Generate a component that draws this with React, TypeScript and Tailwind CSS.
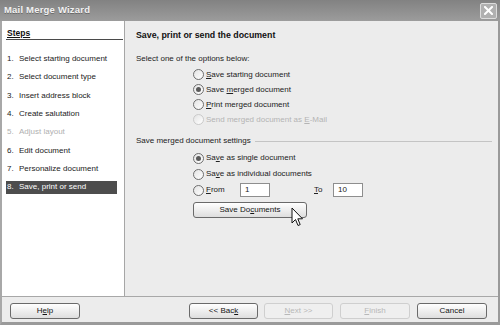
import React from "react";

const FONT = { fontFamily: '"Liberation Sans", Arial, sans-serif' };

type Step = { n: string; label: string; disabled?: boolean; active?: boolean };

const STEPS: Step[] = [
  { n: "1.", label: "Select starting document" },
  { n: "2.", label: "Select document type" },
  { n: "3.", label: "Insert address block" },
  { n: "4.", label: "Create salutation" },
  { n: "5.", label: "Adjust layout", disabled: true },
  { n: "6.", label: "Edit document" },
  { n: "7.", label: "Personalize document" },
  { n: "8.", label: "Save, print or send", active: true },
];

// underline one letter, like a windows mnemonic
function Mn({ text, at }: { text: string; at: number }) {
  return (
    <>
      {text.slice(0, at)}
      <span className="underline underline-offset-1">{text[at]}</span>
      {text.slice(at + 1)}
    </>
  );
}

function Radio({ checked, disabled, children }: { checked?: boolean; disabled?: boolean; children: React.ReactNode }) {
  return (
    <div className="flex h-full items-center">
      <span
        className={
          "flex h-[11px] w-[11px] items-center justify-center rounded-full border bg-gradient-to-br from-[#e4e4e4] to-white " +
          (disabled ? "border-[#cacaca]" : "border-[#6e6e6e]")
        }
      >
        {checked && <span className="h-[5px] w-[5px] rounded-full bg-[#5a5a5a]" />}
      </span>
      <span className={"ml-[2px] text-[8px] leading-none " + (disabled ? "text-[#b4b4b4]" : "text-[#222]")}>{children}</span>
    </div>
  );
}

function Btn({ children, disabled, className = "" }: { children: React.ReactNode; disabled?: boolean; className?: string }) {
  return (
    <div
      className={
        "flex h-4 items-center justify-center rounded-[3px] border text-[8px] leading-none " +
        (disabled
          ? "border-[#cfcfcf] bg-[#efefef] text-[#b8b8b8] "
          : "border-[#6a6a6a] bg-gradient-to-b from-white to-[#dedede] text-[#141414] ") +
        className
      }
    >
      {children}
    </div>
  );
}

function Field({ value }: { value: string }) {
  return (
    <div className="flex h-[14px] w-[30px] items-center border border-[#8e8e8e] bg-white pl-[4px] text-[8px] leading-none text-[#1a1a1a]">
      {value}
    </div>
  );
}

export default function App() {
  return (
    <div style={FONT} className="flex h-[325px] w-[500px] flex-col overflow-hidden bg-[#ececec]">
      {/* title bar */}
      <div className="flex h-[21px] shrink-0 items-center justify-between bg-gradient-to-b from-[#828282] to-[#9c9c9c] pl-[4px] pr-[3px]">
        <span className="text-[9.5px] font-bold tracking-[0.2px] text-[#f2f2f2] [text-shadow:0_1px_0_#6a6a6a]">Mail Merge Wizard</span>
        <div className="flex h-[16px] w-[17px] items-center justify-center rounded-[2px] border border-[#dcdcdc] bg-[#b0b0b0]">
          <svg width="9" height="9" viewBox="0 0 9 9">
            <path d="M1 1 L8 8 M8 1 L1 8" stroke="white" strokeWidth="2" strokeLinecap="square" />
          </svg>
        </div>
      </div>

      <div className="flex min-h-0 flex-1 flex-col border-x-2 border-b-[3px] border-[#9a9a9a] border-l-[#a8a8a8]">
        <div className="flex min-h-0 flex-1">
          {/* steps pane */}
          <div className="w-[123px] shrink-0 border-r border-[#a6a6a6] bg-white pr-[1px] pl-[4px] pt-[6px]">
            <div className="flex h-[13px] items-end border-b border-[#4a4a4a] pb-[2px] pl-[1px] text-[8.5px] font-bold leading-none text-[#111] underline underline-offset-1">
              Steps
            </div>
            <div className="mt-[10px]">
              {STEPS.map((s) => (
                <div key={s.n} className="flex h-[18.3px] items-center">
                  <div
                    className={
                      "flex h-[13px] w-[111px] items-center pl-[1px] text-[8px] leading-none " +
                      (s.active ? "bg-[#4d4d4d] text-white" : s.disabled ? "text-[#b0b0b0]" : "text-[#222]")
                    }
                  >
                    <span className="w-[12px]">{s.n}</span>
                    <span>{s.label}</span>
                  </div>
                </div>
              ))}
            </div>
          </div>

          {/* content pane */}
          <div className="flex flex-1 flex-col pt-[6px]">
            <div className="flex h-4 items-center pl-[11px] text-[8.8px] font-bold leading-none text-[#111]">
              Save, print or send the document
            </div>
            <div className="mt-[8px] flex h-4 items-center pl-[11px] text-[8px] leading-none text-[#222]">
              Select one of the options below:
            </div>
            <div className="pl-[68px]">
              <div className="h-[15px]"><Radio><Mn text="Save starting document" at={0} /></Radio></div>
              <div className="h-[15px]"><Radio checked>Save <Mn text="merged" at={0} /> document</Radio></div>
              <div className="h-[15px]"><Radio><Mn text="Print merged document" at={0} /></Radio></div>
              <div className="h-[15px]"><Radio disabled>Send merged document as <Mn text="E-Mail" at={0} /></Radio></div>
            </div>

            <div className="mt-[6px] flex h-4 items-center pl-[11px] pr-[6px]">
              <span className="text-[8px] leading-none text-[#222]">Save merged document settings</span>
              <div className="ml-[4px] h-px flex-1 bg-[#c4c4c4]" />
            </div>
            <div className="mt-[1px] pl-[68px]">
              <div className="h-4"><Radio checked><Mn text="Save" at={2} /> as single document</Radio></div>
              <div className="h-4"><Radio><Mn text="Save" at={2} /> as individual documents</Radio></div>
              <div className="flex h-4 items-center">
                <div className="w-[47px]"><Radio><Mn text="From" at={0} /></Radio></div>
                <Field value="1" />
                <span className="ml-[44px] w-[19px] text-[8px] leading-none text-[#222]"><Mn text="To" at={0} /></span>
                <Field value="10" />
              </div>
              <div className="relative mt-1 w-[114px]">
                <Btn>Save Do<Mn text="cuments" at={0} /></Btn>
                <svg className="absolute left-[98px] top-[5px]" width="13" height="21" viewBox="0 0 13 21">
                  <path d="M1 1 L1 16 L4.5 12.5 L7 18.5 L9.2 17.6 L6.8 11.8 L11.5 11.8 Z" fill="white" stroke="#111" strokeWidth="1" strokeLinejoin="round" />
                </svg>
              </div>
            </div>
          </div>
        </div>

        {/* footer */}
        <div className="flex h-[26px] shrink-0 items-start border-t border-[#a8a8a8] pt-[6px] pl-[8px]">
          <Btn className="w-[70px]"><Mn text="Help" at={1} /></Btn>
          <Btn className="ml-[109px] w-[69px]">&lt;&lt; Bac<Mn text="k" at={0} /></Btn>
          <Btn disabled className="ml-[6px] w-[69px]"><Mn text="Next" at={0} /> &gt;&gt;</Btn>
          <Btn disabled className="ml-[7px] w-[70px]"><Mn text="Finish" at={0} /></Btn>
          <Btn className="ml-[7px] w-[70px]">Cancel</Btn>
        </div>
      </div>
    </div>
  );
}
